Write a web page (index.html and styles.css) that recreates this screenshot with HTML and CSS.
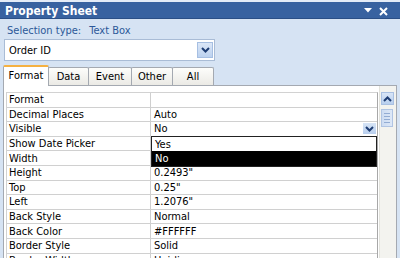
FILE: index.html
```html
<!DOCTYPE html>
<html lang="en">

<head>
  <meta charset="UTF-8">
  <meta name="viewport" content="width=device-width, initial-scale=1.0">
  <title>Property Sheet</title>
  <link rel="stylesheet" href="styles.css">
</head>

<body>
  <div class="window">
    <div class="titlebar">
      <span class="title">Property Sheet</span>
      <svg class="title-icons" width="30" height="10" viewBox="0 0 30 10">
        <polygon points="0,1 8,1 4,5.5" fill="#fff" />
        <path d="M16 1 L23 8 M23 1 L16 8" stroke="#fff" stroke-width="2" />
      </svg>
    </div>

    <div class="selection">
      <span>Selection type:</span>
      <span class="sel-value">Text Box</span>
    </div>

    <div class="combo">
      <span class="combo-text">Order ID</span>
      <span class="combo-btn">
        <svg width="9" height="6" viewBox="0 0 9 6">
          <path d="M1 1 L4.5 4.5 L8 1" fill="none" stroke="#1e3d73" stroke-width="2" />
        </svg>
      </span>
    </div>

    <div class="tabs">
      <div class="tab selected">Format</div>
      <div class="tab">Data</div>
      <div class="tab">Event</div>
      <div class="tab">Other</div>
      <div class="tab">All</div>
    </div>

    <div class="sheet">
      <div class="grid">
        <div class="row"><div class="label">Format</div><div class="value"></div></div>
        <div class="row"><div class="label">Decimal Places</div><div class="value">Auto</div></div>
        <div class="row">
          <div class="label">Visible</div>
          <div class="value">No
            <span class="drop-btn">
              <svg width="9" height="6" viewBox="0 0 9 6">
                <path d="M1 1 L4.5 4.5 L8 1" fill="none" stroke="#1e3d73" stroke-width="2" />
              </svg>
            </span>
          </div>
        </div>
        <div class="row"><div class="label">Show Date Picker</div><div class="value"></div></div>
        <div class="row"><div class="label">Width</div><div class="value"></div></div>
        <div class="row"><div class="label">Height</div><div class="value">0.2493"</div></div>
        <div class="row"><div class="label">Top</div><div class="value">0.25"</div></div>
        <div class="row"><div class="label">Left</div><div class="value">1.2076"</div></div>
        <div class="row"><div class="label">Back Style</div><div class="value">Normal</div></div>
        <div class="row"><div class="label">Back Color</div><div class="value">#FFFFFF</div></div>
        <div class="row"><div class="label">Border Style</div><div class="value">Solid</div></div>
        <div class="row"><div class="label">Border Width</div><div class="value">Hairline</div></div>

        <ul class="droplist">
          <li class="opt">Yes</li>
          <li class="opt active">No</li>
        </ul>
      </div>

      <div class="scrollbar">
        <div class="scroll-btn">
          <svg width="9" height="6" viewBox="0 0 9 6">
            <path d="M1 5 L4.5 1.5 L8 5" fill="none" stroke="#1e3d73" stroke-width="2" />
          </svg>
        </div>
        <div class="thumb">
          <span></span><span></span><span></span><span></span>
        </div>
      </div>
    </div>
  </div>
</body>

</html>
```

FILE: styles.css
```css
body {
  margin: 0;
  padding: 0;
  font-family: "DejaVu Sans Condensed", "Liberation Sans", sans-serif;
  font-size: 11px;
  background-color: #d6e3f3;
}

.window {
  width: 400px;
  height: 258px;
  overflow: hidden;
  border-top: 2px solid #e4ecf7;
}

.titlebar {
  height: 16px;
  background-color: #3862a0;
  border-bottom: 1px solid #2b4f86;
  display: flex;
  align-items: center;
  justify-content: space-between;
  padding: 0 5px 0 5px;
}

.title {
  color: #fff;
  font-weight: bold;
  font-size: 12px;
  margin-top: 1px;
}

.title-icons {
  margin-top: 3px;
  margin-right: 1px;
}

.selection {
  color: #2c5898;
  height: 18px;
  padding: 2px 0 0 7px;
  display: flex;
  align-items: center;
}

.sel-value {
  margin-left: 8px;
}

.combo {
  margin: 0 0 0 4px;
  width: 209px;
  height: 20px;
  background-color: #fff;
  border: 1px solid #a9bcd6;
  display: flex;
  align-items: center;
  justify-content: space-between;
}

.combo-text {
  padding-left: 4px;
}

.combo-btn {
  width: 16px;
  height: 16px;
  margin-right: 1px;
  background: linear-gradient(#dbe7f7, #bcd2ef);
  border: 1px solid #a6bfe2;
  box-sizing: border-box;
  display: flex;
  align-items: center;
  justify-content: center;
}

.tabs {
  display: flex;
  align-items: flex-end;
  margin: 4px 0 0 3px;
  height: 20px;
  position: relative;
  z-index: 1;
}

.tab {
  height: 18px;
  box-sizing: border-box;
  border: 1px solid #a4a9b1;
  border-bottom: none;
  border-radius: 2px 2px 0 0;
  background: linear-gradient(#fdfdfb, #ebeae5);
  display: flex;
  align-items: center;
  justify-content: center;
  margin-right: -1px;
  width: 41px;
}

.tab:nth-child(3) {
  width: 44px;
}

.tab:nth-child(4),
.tab:nth-child(5) {
  width: 42px;
}

.tab.selected {
  height: 21px;
  width: 46px;
  background: #fff;
  border-top: 2px solid #f5b142;
  margin-bottom: -1px;
  padding-bottom: 2px;
}

.sheet {
  margin: 0 3px 0 3px;
  height: 200px;
  background-color: #fff;
  border: 1px solid #a4a9b1;
  padding: 6px 0 0 2px;
  display: flex;
}

.grid {
  width: 372px;
  border-top: 1px solid #d2d2d2;
  border-left: 1px solid #d2d2d2;
  border-right: 1px solid #a8a8a8;
  position: relative;
  align-self: flex-start;
}

.row {
  display: flex;
  height: 14.6px;
  box-sizing: border-box;
  border-bottom: 1px solid #d0d0d0;
}

.label {
  width: 141px;
  padding-left: 2px;
  border-right: 1px solid #cfcfcf;
  display: flex;
  align-items: center;
  white-space: nowrap;
}

.value {
  flex: 1;
  padding-left: 3px;
  display: flex;
  align-items: center;
  position: relative;
  white-space: nowrap;
}

.drop-btn {
  position: absolute;
  right: 1px;
  top: 1px;
  width: 13px;
  height: 11px;
  background: linear-gradient(#d6e4f6, #b9cfee);
  display: flex;
  align-items: center;
  justify-content: center;
}

.droplist {
  position: absolute;
  left: 144px;
  right: 0;
  top: 43px;
  margin: 0;
  padding: 0;
  list-style: none;
  background: #fff;
  border: 1px solid #222;
}

.opt {
  height: 14px;
  padding-left: 3px;
  display: flex;
  align-items: center;
}

.opt.active {
  height: 15px;
  background: #000;
  color: #fff;
}

.scrollbar {
  width: 16px;
  margin-left: 1px;
  margin-top: -6px;
  padding-top: 6px;
  background-color: #f3f3ef;
  border-left: 1px solid #e2e2dc;
}

.scroll-btn {
  width: 13px;
  height: 13px;
  margin-left: 1px;
  background: linear-gradient(#d8e5f7, #b8cfee);
  border: 1px solid #a9c0e2;
  box-sizing: border-box;
  display: flex;
  align-items: center;
  justify-content: center;
}

.thumb {
  width: 12px;
  height: 18px;
  margin: 4px 0 0 1px;
  box-sizing: border-box;
  background: linear-gradient(90deg, #cddcf2, #dde8f7);
  border: 1px solid #b0c4e3;
  display: flex;
  flex-direction: column;
  justify-content: center;
  align-items: center;
  gap: 2px;
}

.thumb span {
  width: 6px;
  height: 1px;
  background-color: #93acd3;
}
```
